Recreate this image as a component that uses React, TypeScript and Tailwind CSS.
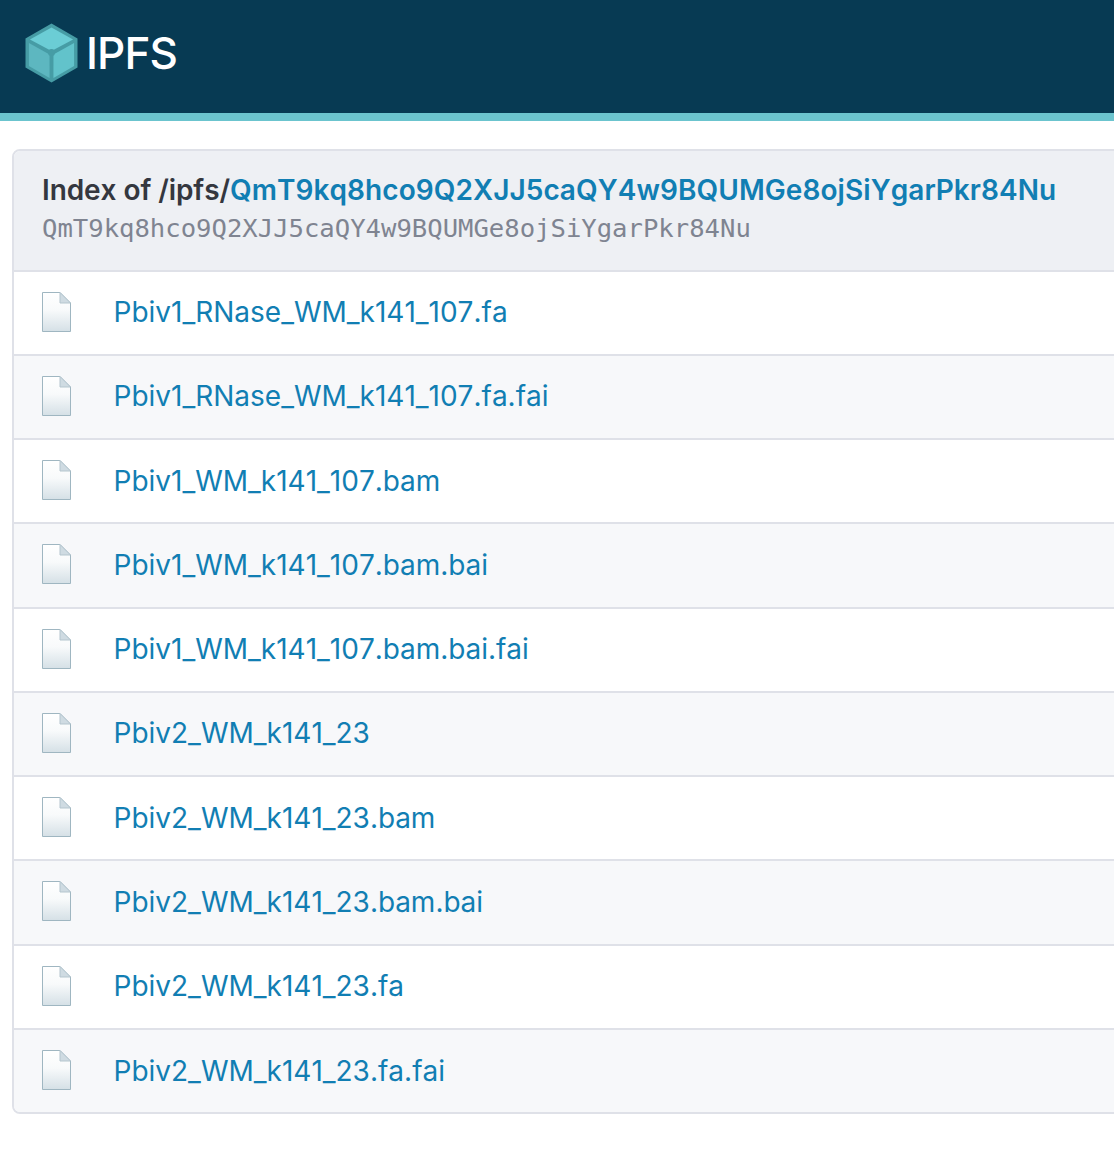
const hash = "QmT9kq8hco9Q2XJJ5caQY4w9BQUMGe8ojSiYgarPkr84Nu";

const files = [
  "Pbiv1_RNase_WM_k141_107.fa",
  "Pbiv1_RNase_WM_k141_107.fa.fai",
  "Pbiv1_WM_k141_107.bam",
  "Pbiv1_WM_k141_107.bam.bai",
  "Pbiv1_WM_k141_107.bam.bai.fai",
  "Pbiv2_WM_k141_23",
  "Pbiv2_WM_k141_23.bam",
  "Pbiv2_WM_k141_23.bam.bai",
  "Pbiv2_WM_k141_23.fa",
  "Pbiv2_WM_k141_23.fa.fai",
];

function CubeLogo() {
  return (
    <svg width="53" height="60" viewBox="0 0 54 60" preserveAspectRatio="none" className="ml-[1px] shrink-0">
      <path d="M27 0.5 L53.5 15.5 L53.5 44.5 L27 59.5 L0.5 44.5 L0.5 15.5 Z" fill="#469ca5" />
      <path d="M27 4.5 L49 16.5 L27 28 L5 16.5 Z" fill="#6bcdd5" />
      <path d="M4 20 L25 31.5 L25 55 L4 43 Z" fill="#5db7c0" />
      <path d="M50 20 L29 31.5 L29 55 L50 43 Z" fill="#62c3cb" />
      <circle cx="27" cy="29.5" r="3.6" fill="#469ca5" />
    </svg>
  );
}

function FileIcon() {
  return (
    <svg width="29" height="40" viewBox="0 0 29 40" className="mb-[2px] shrink-0">
      <defs>
        <linearGradient id="page" x1="0" y1="0" x2="0" y2="1">
          <stop offset="0" stopColor="#ffffff" />
          <stop offset="0.45" stopColor="#f8fafb" />
          <stop offset="1" stopColor="#d5e0e6" />
        </linearGradient>
      </defs>
      <path d="M0.5 0.5 H18 L28.5 11 V39.5 H0.5 Z" fill="url(#page)" stroke="#9fb6c1" />
      <path d="M18 0.5 V11 H28.5 Z" fill="#cfdbe2" stroke="#b4c5ce" />
    </svg>
  );
}

export default function App() {
  return (
    <div className="min-h-[1170px] w-full overflow-hidden bg-white font-['Inter',sans-serif] [font-kerning:none]">
      <header className="flex h-[121px] items-start border-b-[8px] border-[#6bc4ce] bg-[#073a53] pl-[24px] pt-[23px]">
        <CubeLogo />
        <span className="ml-[8px] text-[44px] leading-[60px] font-medium tracking-[-0.9px] text-white">IPFS</span>
      </header>

      <div className="ml-[12px] mt-[28px] w-[1200px] overflow-hidden rounded-[8px] border-2 border-[#dfe1e8]">
        <div className="h-[120.5px] border-b-2 border-[#dfe1e8] bg-[#eef0f4] pl-[28px] pt-[21px]">
          <div className="text-[28px] leading-[36px] font-semibold tracking-[0.05px] text-[#34373f]">
            <span className="tracking-[-0.08px]">Index of /ipfs/</span>
            <a className="tracking-[0.07px] text-[#117eb3]">{hash}</a>
          </div>
          <div className="mt-[2px] font-['DejaVu_Sans_Mono',monospace] text-[25.6px] leading-[36px] text-[#7f8491]">
            {hash}
          </div>
        </div>
        {files.map((name, i) => (
          <div
            key={name}
            className={`flex h-[84.25px] items-center border-b-2 border-[#dfe1e8] pl-[28px] last:h-[82.5px] last:border-b-0 ${
              i % 2 === 0 ? "bg-white" : "bg-[#f7f8fa]"
            }`}
          >
            <FileIcon />
            <a className="mb-[1px] ml-[42.5px] text-[28px] leading-[36px] text-[#117eb3]">{name}</a>
          </div>
        ))}
      </div>
    </div>
  );
}
